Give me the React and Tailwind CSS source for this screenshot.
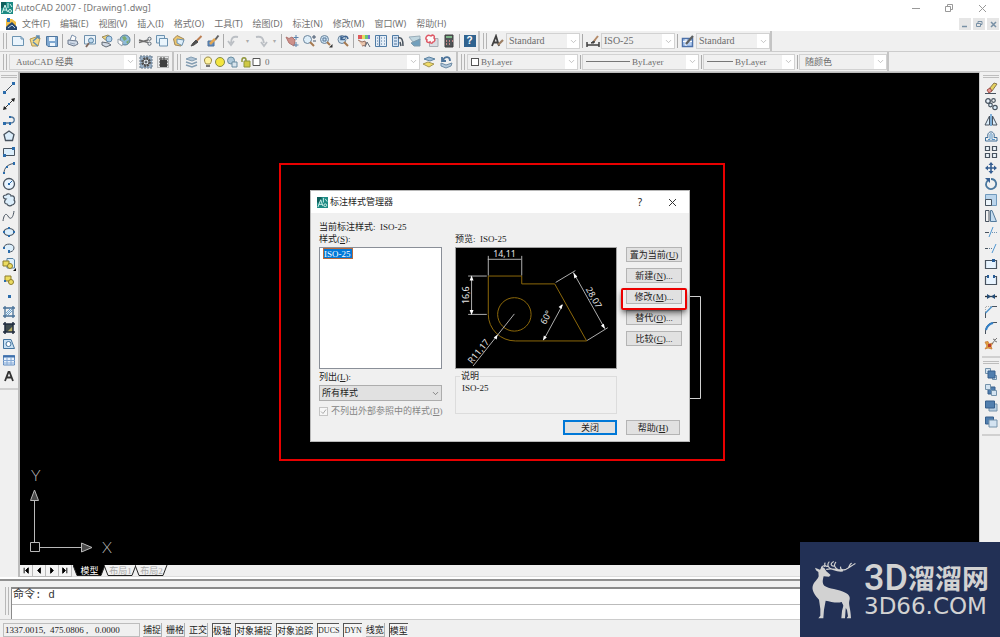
import { ChevronDown } from "lucide-react";

const SIM = "font-['Liberation_Serif','Noto_Sans_CJK_SC',serif]";

function Icon({ children, className = "" }) {
  return (
    <svg
      viewBox="0 0 14 14"
      fill="none"
      stroke="#48535f"
      className={`w-3.5 h-3.5 shrink-0 ${className}`}
      aria-hidden="true"
    >
      {children}
    </svg>
  );
}

function CadMark({ className = "" }) {
  return (
    <svg viewBox="0 0 12 12" className={`shrink-0 ${className}`} aria-hidden="true">
      <rect width="12" height="12" fill="#1d8a84" />
      <path d="M0 0h5v3L2 6H0z" fill="#0e5f5c" />
      <path d="M1 11L4 3L6.500 10M2 8H6M7 1V6M9 2L11 5" fill="none" stroke="#d8f3ee" />
      <circle cx="9" cy="9" r="1.500" fill="none" stroke="#d8f3ee" />
    </svg>
  );
}

/* STANDARD TOOLBAR */
const fileTools = [
  ["新建", <><path d="M1.5 2.500H10L12.500 5V11.500H1.500Z" fill="#eaf5ff" stroke="#5584a8" /><path d="M10 2.500V5h2.500" stroke="#5584a8" /></>],
  ["打开", <><path d="M2 5L8 3L12 4L10 12L4 12Z" fill="#f4d675" stroke="#a88737" /><path d="M5 7L11 2M8 2h3v3M5 8L10 12" stroke="#477ba5" strokeWidth="1.500" /></>],
  ["保存", <><path d="M1.500 2.500H12.500V12.500H3L1.500 11Z" fill="#6c9ccc" stroke="#356391" /><path d="M4 3h6v4H4zM5 9h5v3H5z" fill="#edf6ff" stroke="none" /></>],
];
const plotTools = [
  ["打印", <><path d="M4 6L6 1L10 3L9 7" fill="#fff" stroke="#6780a0" /><path d="M2 6L11 7L12 10L8 12L2 10Z" fill="#cad6e6" stroke="#56657c" /><path d="M4 9L9 10" stroke="#8295ad" /></>],
  ["打印预览", <><path d="M1.500 1.500H12.500V10H1.500Z" fill="#e8f3fb" stroke="#5980a1" /><circle cx="8" cy="6.500" r="2.500" fill="#b5d6ef" stroke="#406f95" /><path d="M6 9L3 13" stroke="#6b5145" strokeWidth="1.800" /></>],
  ["发布", <><path d="M2 3L8 1L12 4L8 8Z" fill="#f2d267" stroke="#8c7b48" /><circle cx="9" cy="5" r="3" fill="#a8d0ed" stroke="#4c789f" /><path d="M2 8L8 9L11 11L6 13L2 11Z" fill="#ccd6e2" /></>],
  ["三维 DWF", <><circle cx="8" cy="6" r="5" fill="#7eb3d8" stroke="#3d6b88" /><path d="M5 3L8 2L10 5L7 7ZM9 8L12 6L11 10Z" fill="#6a9e59" stroke="none" /><path d="M1 5L6 8L5 12L1 9Z" fill="#fff" stroke="#8894a0" /></>],
];
const editTools = [
  ["剪切", <><path d="M1 6L10 8.500M1 8.500L10 6" stroke="#555" strokeWidth="1.300" /><circle cx="11.500" cy="4.800" r="1.600" /><circle cx="11.500" cy="9.700" r="1.600" /></>],
  ["复制", <><path d="M1.500 1.500H9.500V9H1.500Z" fill="#dceefb" stroke="#5682a5" /><path d="M4.500 4.500H12.500V12H4.500Z" fill="#eaf6ff" stroke="#5682a5" /></>],
  ["粘贴", <><path d="M1.500 5L5 1.500L12 5L9 12L3 11Z" fill="#eebf55" stroke="#8f7541" /><path d="M5 5L12 6L10 11.500L5 9Z" fill="#dceefb" stroke="#5682a5" /></>],
  ["特性匹配", <><path d="M12.500 2L8 6.500" stroke="#b36b38" strokeWidth="2" /><path d="M7 6L9 8L5 11L2 12L4 9Z" fill="#333" stroke="#333" /></>],
  ["块编辑器", <><path d="M2 7h6v5H2z" fill="#477cba" stroke="#345d8b" /><path d="M12.500 1.500L9 6" stroke="#4a4a4a" strokeWidth="2" /><path d="M9 5L4 10" stroke="#e09a38" strokeWidth="2.500" /></>],
];
const undoTool = ["放弃", <path d="M11 3C6 2 4 4 4 9M1 7L4 11L7 7" stroke="#b2b7bd" strokeWidth="1.800" />];
const redoTool = ["重做", <path d="M2 3C8 2 9 4 10 9M7 8L10 12L13 8" stroke="#b2b7bd" strokeWidth="1.800" />];
const viewTools = [
  ["实时平移", <><path d="M1 3L4 4.500L7 3L10 6L9 12L4 9Z" fill="#c88079" stroke="#a65e59" /><path d="M11 1V6M8.500 3.500h5M11 8V13M8.500 11h5" stroke="#426f9d" /></>],
  ["实时缩放", <><circle cx="5.500" cy="5.500" r="4" fill="#dceefb" stroke="#54728e" /><path d="M8 8L12 12" stroke="#9a6535" strokeWidth="2" /><path d="M10 3h4M12 1v4M11 7h3" stroke="#243a56" /></>],
  ["窗口缩放", <><circle cx="5.500" cy="5.500" r="4" fill="#c7e0f3" stroke="#54728e" /><path d="M4 4h3v3H4z" stroke="#3e6287" /><path d="M8 8L11 11" stroke="#9a6535" strokeWidth="2" /><path d="M13.500 10V13.500H10Z" fill="#111" stroke="none" /></>],
  ["缩放上一个", <><circle cx="6" cy="5.500" r="4" fill="#c7e0f3" stroke="#54728e" /><path d="M8 8L12 12" stroke="#9a6535" strokeWidth="2" /><path d="M12 5C11 1 7 2 5 5M5 2V5.500H9" stroke="#1f4b7f" strokeWidth="1.500" /></>],
];
const paletteTools = [
  ["特性", <><path d="M1 1h4v4H1z" fill="#db4141" stroke="none" /><path d="M5 1h3v4H5z" fill="#e5d94a" stroke="none" /><path d="M8 1h3v4H8z" fill="#4cc068" stroke="none" /><path d="M11 1h2v4h-2z" fill="#5b5bd5" stroke="none" /><path d="M1 6L5 8L8 7L9 11L5 12" fill="#e9bea1" stroke="#8b5d4b" /><path d="M8 13L10 8L13 13" /></>],
  ["设计中心", <><path d="M1.500 1.500H12.500V12.500H1.500Z" fill="#e4eef9" stroke="#35689a" /><path d="M5.500 2V12M3 4h1M3 7h1M3 10h1M7 4h1M10 4h1M7 7h1M10 7h1M7 10h1M10 10h1" stroke="#356391" strokeWidth="1.200" /></>],
  ["工具选项板", <><path d="M1.500 1.500H7.500V12.500H1.500Z" fill="#d2e3f5" stroke="#35689a" /><path d="M3 4h3M3 7h3M3 10h3" stroke="#356391" /><path d="M7 4C11 3 12 6 12 12M9 8L10 12" stroke="#2f3b48" strokeWidth="1.500" /></>],
  ["图纸集", <><path d="M1 3L12 2V6L5 8Z" fill="#b9d3de" stroke="#8aa2b0" /><path d="M3 9L12 5V12L6 12Z" fill="#5b91b3" stroke="#6b8ba0" /></>],
  ["标记集", <><path d="M4.500 4.500H13V12.500H4.500Z" fill="#d6dae0" stroke="#9ba2aa" /><path d="M2 2C4 0 5 2 6 2C8 0 10 2 9 4C11 6 9 8 8 8C7 10 5 9 5 8C3 9 1 8 2 6C0 5 1 3 2 2Z" fill="#fff" stroke="#db3d4d" strokeWidth="1.500" /></>],
  ["计算器", <><path d="M3 1h8v12H3z" fill="#353a3e" stroke="#222" /><path d="M4 3h6" stroke="#68ac75" strokeWidth="2" /><path d="M4 7h1M7 7h1M10 7h1M4 10h1M7 10h1" stroke="#ed8989" strokeWidth="1.500" /></>],
];
const textStyleIcon = <><path d="M1 12L5 2L8 12M3 8.500h4" stroke="#222" strokeWidth="1.800" /><path d="M7 11L12 6" stroke="#8f6c4c" strokeWidth="2.200" /></>;
const dimStyleIcon = <><path d="M1 11H13M1 8V13M13 8V13" stroke="#222" strokeWidth="1.500" /><path d="M5 9L9 6L8 9Z" fill="#222" stroke="#222" /><path d="M8 7L12 2" stroke="#aa7850" strokeWidth="2" /></>;
const tableStyleIcon = <><path d="M1.500 4.500H11.500V12.500H1.500Z" fill="#a9c8f3" stroke="#315c9d" strokeWidth="1.500" /><path d="M2 7.500h9M5 5v7" stroke="#fff" /><path d="M5 10L12 2" stroke="#44474a" strokeWidth="2.200" /></>;

const gearIcon = <><path d="M1 1h12v12H1z" fill="#8ca6bf" stroke="#4c657b" strokeDasharray="2 1" /><circle cx="7" cy="7" r="4" fill="none" stroke="#333" strokeWidth="1.800" strokeDasharray="2 1.100" /><circle cx="7" cy="7" r="3" fill="#dfe7ee" stroke="#333" /><circle cx="7" cy="7" r="1" fill="#222" /></>;
const workspaceIcon = <><path d="M1.500 1.500h11v11h-11z" fill="#e4e6e8" stroke="#777" strokeDasharray="1 1" /><path d="M4 5h7v7H4z" fill="#222" stroke="none" /><path d="M3 4h9M5 2v10M8 2v10M3 7h9M3 10h9" stroke="#222" /></>;
const layersIcon = <><path d="M1 4L6 2L12 4L7 6Z" fill="#a5bed2" stroke="#7390a8" /><path d="M1 7L7 9L12 7M1 10L7 12L12 10" stroke="#7390a8" strokeWidth="1.500" /></>;
const layerCurrentIcon = <><path d="M2 4L7 2L13 4L8 6Z" fill="#91b6d3" stroke="#426f93" /><path d="M1 9L6 7L12 9L7 12Z" fill="#f0d94f" stroke="#98863b" /></>;
const layerPrevIcon = <><path d="M2 8L7 10L13 8L12 11L7 13L2 11Z" fill="#a9c2d8" stroke="#597c9a" /><path d="M11 6C11 1 6 1 4 5M3 2V6H7" stroke="#315f8d" strokeWidth="1.800" /></>;

/* DRAW TOOLBAR */
const drawTools = [
  ["直线", <><path d="M2.500 11.500L11.500 2.500" /><path d="M1 10h3v3H1zM10 1h3v3h-3z" fill="#2b6cab" stroke="none" /></>],
  ["构造线", <><path d="M2 12L12 2" stroke="#333" /><path d="M1 13L2 9L5 12ZM13 1L9 2L12 5Z" fill="#222" stroke="none" /><path d="M6 6h2v2H6z" fill="#2b6cab" stroke="none" /></>],
  ["多段线", <><path d="M2 10H8M8 10C14 10 13 4 9 4H7" stroke="#52779b" strokeWidth="1.300" /><path d="M1 9h3v3H1zM7 9h2v3H7zM7 3h2v2H7z" fill="#2b6cab" stroke="none" /></>],
  ["正多边形", <path d="M7 2L12 5.500L10.500 11.500H3.500L2 5.500Z" fill="#dceefb" strokeWidth="1.300" />],
  ["矩形", <><path d="M1.500 3.500H12.500V10.500H1.500Z" fill="#dceefb" /><path d="M1 9h3v3H1zM10 2h3v3h-3z" fill="#2b6cab" stroke="none" /></>],
  ["圆弧", <><path d="M2 12C2 7 6 3 12 2.500" /><path d="M1 11h2v2H1zM4 5h2v2H4zM11 1h2v3h-2z" fill="#2b6cab" stroke="none" /></>],
  ["圆", <><circle cx="7" cy="7" r="5.500" fill="#e8f4ff" strokeWidth="1.300" /><path d="M7 7L10 4" stroke="#2b6cab" /><path d="M6 6h2v2H6z" fill="#2b6cab" stroke="none" /></>],
  ["修订云线", <path d="M4 6C1 6 0 2 4 2C6 0 9 1 9 3C12 2 13 5 12 7C14 9 12 12 10 12C8 14 5 12 5 11C2 11 2 8 4 6Z" fill="#dceefb" strokeWidth="1.200" />],
  ["样条曲线", <path d="M1 12C2 5 4 4 6 7C8 11 11 10 12 2" />],
  ["椭圆", <><ellipse cx="7" cy="7" rx="5" ry="3.500" fill="#dceefb" strokeWidth="1.200" /><path d="M1 6h2v2H1zM11 6h2v2h-2zM6 2h2v2H6zM6 10h2v2H6z" fill="#2b6cab" stroke="none" /></>],
  ["椭圆弧", <><path d="M2 6C3 2 12 2 12 7C12 10 9 11 7 11" fill="#dceefb" /><path d="M1 6h2v2H1zM6 9h2v3H6z" fill="#2b6cab" stroke="none" /></>],
  ["插入块", <><path d="M5 1.500H11L12.500 3V11H5Z" fill="#dceefb" stroke="#5682a5" /><path d="M1 4h6v5H1z" fill="#ecdc61" stroke="#8c7d2c" /><circle cx="8" cy="9" r="2.500" fill="#ecdc61" stroke="#8c7d2c" /><path d="M14 11V14H11Z" fill="#111" stroke="none" /></>],
  ["创建块", <><path d="M3 3h6v5H3z" fill="#ecdc61" stroke="#8c7d2c" /><circle cx="9" cy="9" r="2.500" fill="#ecdc61" stroke="#8c7d2c" /><path d="M2 7h2v2H2z" fill="#2b6cab" stroke="none" /></>],
  ["点", <path d="M6 6h3v3H6z" fill="#2b6cab" stroke="none" />],
  ["图案填充", <><path d="M3 1V13M11 1V13M1 3H13M1 11H13" stroke="#456f96" strokeWidth="1.300" /><path d="M4 8L8 4M4 10L10 4M6 10L10 6" stroke="#6ba2cf" /></>],
  ["渐变色", <><path d="M3 3h8v8H3z" fill="#3e4a4e" stroke="none" /><path d="M5 11L11 5V11Z" fill="#b8ad62" stroke="none" /><path d="M3 1V13M11 1V13M1 3H13M1 11H13" stroke="#1f2b3e" strokeWidth="1.500" /></>],
  ["面域", <><path d="M1.500 2.500H9L12.500 11.500H1.500Z" fill="#c8e0f4" stroke="#42739e" /><circle cx="6.500" cy="7" r="2.500" fill="#fff" stroke="#42739e" /></>],
  ["表格", <><path d="M1.500 2.500H12.500V12H1.500Z" fill="#e8f2fc" stroke="#5f8abe" /><path d="M1 3.500H13" stroke="#3e6faa" strokeWidth="2" /><path d="M1 7.500H13M1 10H13M5 4V12M9 4V12" stroke="#84a8d5" /></>],
  ["多行文字", <path d="M3 12L6.500 3H7.500L11 12M4 8.500H10" stroke="#333" strokeWidth="1.800" />],
];

/* MODIFY TOOLBAR */
const modifyTools = [
  ["删除", <><path d="M5 8L10 2L13 3L8 10Z" fill="#e4d15f" stroke="#89774a" /><path d="M3 9L6 7L8 10L5 12Z" fill="#e69993" stroke="#a14e48" /><path d="M1 12.500H12" /></>],
  ["复制对象", <><circle cx="4" cy="4" r="2.300" fill="#e8f1fa" strokeWidth="1.300" /><circle cx="9.500" cy="3.500" r="1.800" strokeWidth="1.200" /><circle cx="6.500" cy="8" r="1.800" fill="#dceefb" strokeWidth="1.200" /><circle cx="11" cy="10.500" r="2.200" fill="#dceefb" strokeWidth="1.200" /></>],
  ["镜像", <><path d="M5.500 3V12H1ZM8.500 3V12H13Z" fill="#dceefb" /><path d="M7 1V13" stroke="#5b9bd0" strokeWidth="1.500" /></>],
  ["偏移", <><path d="M1.500 12V8.500H4C2 1 12 1 10 8.500H13V12Z" stroke="#406e97" /><path d="M4 10.500H6V6C6 4 8 4 8 6V10.500H11" stroke="#5794c7" /></>],
  ["阵列", <><path d="M1.500 1.500h4v4h-4zM8.500 1.500h4v4h-4zM1.500 8.500h4v4h-4zM8.500 8.500h4v4h-4z" fill="#eef5fb" strokeWidth="1.200" /></>],
  ["移动", <><path d="M7 2V12M2 7H12" stroke="#365f92" strokeWidth="1.600" /><path d="M7 1L9.500 4H4.500ZM7 13L4.500 10H9.500ZM1 7L4 4.500V9.500ZM13 7L10 9.500V4.500Z" fill="#365f92" stroke="none" /></>],
  ["旋转", <><path d="M4 3C-1 9 5 14 10 11C14 8 12 2 7 2" stroke="#4b789f" strokeWidth="1.800" /><path d="M1 1H6V6Z" fill="#365f92" stroke="none" /></>],
  ["缩放", <><path d="M1.500 1.500H12.500V12.500H1.500Z" fill="#bbd5ec" stroke="#7099bc" /><path d="M1.500 6.500H7.500V12.500H1.500Z" fill="#edf5fb" /></>],
  ["拉伸", <><path d="M1.500 1.500H5V12.500H1.500Z" /><path d="M6.500 1.500H8L12.500 12.500H6.500Z" fill="#c4dcf0" stroke="#537a9c" /></>],
  ["修剪", <><path d="M1 7.500H5" /><path d="M5 12L9 2" stroke="#5097d2" /><path d="M8 7.500H13" stroke="#7295b4" strokeDasharray="1 1" /></>],
  ["延伸", <><path d="M1 7.500H4" /><path d="M5 7.500H9" stroke="#5d7c96" strokeDasharray="1 1" /><path d="M8 12L12 3" stroke="#5097d2" /></>],
  ["打断于点", <><path d="M1.500 3.500H12.500V11.500H1.500Z" fill="#e8f4ff" strokeWidth="1.200" /><path d="M8 2h3v3H8z" fill="#285d97" stroke="none" /></>],
  ["打断", <><path d="M4 3.500H1.500V11.500H12.500V3.500H10" fill="#e8f4ff" strokeWidth="1.200" /><path d="M3 2h2v3H3zM9 2h2v3H9z" fill="#285d97" stroke="none" /></>],
  ["合并", <><path d="M1 7.500H13" stroke="#333" strokeWidth="1.300" /><path d="M3 5L7 7.500L3 10ZM11 5L7 7.500L11 10Z" fill="#244d77" stroke="none" /></>],
  ["倒角", <><path d="M1.500 13V7M8 1.500H13" /><path d="M1.500 8L8 1.500" stroke="#4b91ca" strokeWidth="1.500" /><path d="M2 1.500h5M1.500 2v5" stroke="#aaa" strokeDasharray="1 1" /></>],
  ["圆角", <><path d="M1.500 13V10C2 5 5 2 10 1.500H13" /><path d="M2 9C3 5 5 3 9 2" stroke="#307fc7" strokeWidth="2" /></>],
  ["分解", <><path d="M1 5L4 4.500L5 7L9 6L7 9L8 12L4 11L1 12L3 9Z" fill="#e2a23d" stroke="#c97a3a" strokeWidth="0.800" /><path d="M4 7h3v3H4z" fill="#b93b2d" stroke="none" /><path d="M8 7L11 3M9 2L11 3L13 1M11 4L13 5" stroke="#777" /></>],
];
const orderTools = [
  ["前置", <><path d="M1.500 1.500h5v5h-5zM8.500 8.500h4v4h-4z" fill="#d3e3f1" stroke="#7492aa" /><path d="M4 4h7v7H4z" fill="#507eae" stroke="#365f8c" /></>],
  ["后置", <><path d="M4 4h7v7H4z" fill="#507eae" stroke="#365f8c" /><path d="M1.500 1.500h5v5h-5zM7.500 7.500h5v5h-5z" fill="#d3e3f1" stroke="#7492aa" /></>],
  ["置于对象之上", <><path d="M5 5h8v7H5z" fill="#b9cfe3" stroke="#7492aa" /><path d="M1.500 2h9v7h-9z" fill="#507eae" stroke="#365f8c" /></>],
  ["置于对象之下", <><path d="M1.500 2h8v7h-8z" fill="#507eae" stroke="#365f8c" /><path d="M5 5h8v7H5z" fill="#d3e3f1" stroke="#7492aa" /></>],
];

const menus = [
  "文件(F)", "编辑(E)", "视图(V)", "插入(I)", "格式(O)", "工具(T)",
  "绘图(D)", "标注(N)", "修改(M)", "窗口(W)", "帮助(H)",
];

const modes = [
  ["捕捉", false], ["栅格", false], ["正交", false], ["极轴", true], ["对象捕捉", true],
  ["对象追踪", true], ["DUCS", true], ["DYN", true], ["线宽", false], ["模型", true],
];

function Tool({ tool, className = "w-[17px] h-4 opacity-85" }) {
  return (
    <button aria-label={tool[0]} className={`flex items-center justify-center shrink-0 ${className}`}>
      <Icon>{tool[1]}</Icon>
    </button>
  );
}

function Tools({ items }) {
  return items.map((tool) => <Tool key={tool[0]} tool={tool} />);
}

function Grip() {
  return (
    <div className="flex gap-0.5 h-4 ml-[3px] mr-[2px] shrink-0">
      <div className="w-px bg-[#b5b5b5]" />
      <div className="w-px bg-[#b5b5b5]" />
    </div>
  );
}

function Divider() {
  return <div className="w-px h-3.5 ml-[2px] mr-px bg-[#aaaaaa] shrink-0" />;
}

function Strip({ children }) {
  return (
    <div className="flex items-center h-full border-r-2 border-[#c4c4c4] shrink-0">
      {children}
    </div>
  );
}

function Combo({ label, value, width, prefix, text = "text-[9px]" }) {
  return (
    <div className={`flex items-center h-4 border border-[#d2d2d2] bg-[#f0f0f0] relative shrink-0 ${width}`}>
      {prefix}
      <select
        aria-label={label}
        className={`${SIM} ${text} appearance-none flex-1 min-w-0 h-full pl-[2px] leading-3 text-[#6c6c6c]`}
      >
        <option>{value}</option>
      </select>
      <span className="absolute right-0 inset-y-0 w-3 bg-white flex items-center justify-center pointer-events-none">
        <ChevronDown size={9} strokeWidth={2} className="text-[#b0b0b0]" />
      </span>
    </div>
  );
}

function TitleBar() {
  return (
    <header className="font-['Noto_Sans','Noto_Sans_CJK_SC',sans-serif] bg-white">
      <div className="flex items-center h-4 pl-px text-[#777777]">
        <CadMark className="w-3 h-3" />
        <h1 className="text-[9px] leading-3 pl-0.5">AutoCAD 2007 - [Drawing1.dwg]</h1>
        <div className="ml-auto flex items-center gap-[23px] pr-[13px]">
          <button aria-label="最小化"><svg className="w-2.5 h-2.5" viewBox="0 0 10 10" stroke="#999" fill="none"><path d="M1 5.500h8" /></svg></button>
          <button aria-label="还原"><svg className="w-2.5 h-2.5" viewBox="0 0 10 10" stroke="#999" fill="none"><path d="M1.500 3.500h5v5h-5zM3.500 3V1.500h5v5H7" /></svg></button>
          <button aria-label="关闭窗口"><svg className="w-2.5 h-2.5" viewBox="0 0 10 10" stroke="#999" fill="none"><path d="M2 2l7 7M9 2L2 9" /></svg></button>
        </div>
      </div>
      <nav className="flex items-center h-[15px] pl-[5px] text-[9px] leading-3 text-[#717171]">
        <svg className="w-3 h-3 mr-[5px]" viewBox="0 0 12 12" aria-hidden="true">
          <path d="M1 1h6l4 3v5H1z" fill="#f1bd43" />
          <path d="M2 0h3v4H2z" fill="#2c71b8" />
          <path d="M3 7L7 4L12 9V12H1V9Z" fill="#27476e" />
          <path d="M3 10L7 7L10 10" stroke="#b7d1e9" fill="none" />
        </svg>
        <div className="flex gap-2.5">
          {menus.map((m) => (
            <button key={m} className="whitespace-nowrap">{m}</button>
          ))}
        </div>
        <div className="ml-auto flex gap-[2px] pr-px">
          <button aria-label="最小化图形" className="w-3 h-3 bg-[#e6e6e6]"><svg viewBox="0 0 12 12" stroke="#7890a5" fill="none"><path d="M3 8.500h5" strokeWidth="1.500" /></svg></button>
          <button aria-label="还原图形" className="w-3 h-3 bg-[#e6e6e6]"><svg viewBox="0 0 12 12" stroke="#7890a5" fill="none"><path d="M3.500 5.500h4v3h-4zM5 5V3.500h4v3H8" /></svg></button>
          <button aria-label="关闭图形" className="w-3 h-3 bg-[#e6e6e6]"><svg viewBox="0 0 12 12" stroke="#7890a5" fill="none"><path d="M4 4l5 5M9 4L4 9" strokeWidth="1.500" /></svg></button>
        </div>
      </nav>
    </header>
  );
}

function Toolbars() {
  return (
    <div>
      <div className="flex items-center h-[21px] border-b border-[#cccccc]">
        <Strip>
          <Grip />
          <Tools items={fileTools} />
          <Divider />
          <Tools items={plotTools} />
          <Divider />
          <Tools items={editTools} />
          <Divider />
          <Tool tool={undoTool} />
          <button aria-label="放弃列表" className="w-2.5 text-[6px] leading-3 text-[#aaaaaa]">▾</button>
          <Tool tool={redoTool} />
          <button aria-label="重做列表" className="w-2.5 text-[6px] leading-3 text-[#aaaaaa]">▾</button>
          <Divider />
          <Tools items={viewTools} />
          <Divider />
          <Tools items={paletteTools} />
          <Divider />
          <button aria-label="帮助" className="w-[17px] h-4 flex items-center justify-center">
            <span className="w-3 h-3 bg-[#30638f] text-white font-['Liberation_Sans',sans-serif] font-bold text-[10px] leading-3">?</span>
          </button>
        </Strip>
        <Strip>
          <Grip />
          <Tool tool={["文字样式", textStyleIcon]} />
          <Combo label="文字样式控制" value="Standard" width="w-[74px]" text="text-[10px]" />
          <Divider />
          <Tool tool={["标注样式", dimStyleIcon]} />
          <Combo label="标注样式控制" value="ISO-25" width="w-[74px]" text="text-[10px]" />
          <Divider />
          <Tool tool={["表格样式", tableStyleIcon]} />
          <Combo label="表格样式控制" value="Standard" width="w-[74px]" text="text-[10px]" />
        </Strip>
      </div>
      <div className="flex items-center h-5 border-b border-[#cccccc]">
        <Strip>
          <Grip />
          <Combo label="工作空间" value="AutoCAD 经典" width="w-32" prefix={<span className="w-1" />} />
          <Tool tool={["工作空间设置", gearIcon]} />
          <Tool tool={["我的工作空间", workspaceIcon]} />
          <div className="w-px" />
        </Strip>
        <Strip>
          <Grip />
          <Tool tool={["图层特性管理器", layersIcon]} />
          <Combo
            label="图层"
            value="0"
            width="w-[220px]"
            prefix={
              <svg viewBox="0 0 62 14" className="w-[62px] h-3.5 shrink-0" fill="none" aria-hidden="true">
                <path d="M5 9C2 5 4 2 7 2S12 5 9 9Z" fill="#fff3a0" stroke="#9a8a42" />
                <path d="M5 11h4" stroke="#777" strokeWidth="2" />
                <circle cx="19" cy="7" r="4.500" fill="#f3e53f" stroke="#85894a" />
                <circle cx="30" cy="5.500" r="3.500" fill="#adc8d9" stroke="#688ba0" />
                <path d="M31 7h5v5h-5z" fill="#d8e4ed" stroke="#688ba0" />
                <path d="M41 7V5C41 2 45 2 45 5V7" stroke="#8f953b" strokeWidth="1.500" />
                <path d="M43 6h6v6h-6z" fill="#cfc943" stroke="#8f953b" />
                <path d="M52 3.500h7v7h-7z" fill="#fff" stroke="#555" />
              </svg>
            }
          />
          <Tool tool={["置为当前图层", layerCurrentIcon]} />
          <Tool tool={["上一个图层", layerPrevIcon]} />
          <div className="w-[2px]" />
        </Strip>
        <Strip>
          <Grip />
          <Combo
            label="颜色"
            value="ByLayer"
            width="w-[111px]"
            prefix={<span className="w-2 h-2 ml-[3px] border border-[#555555] bg-white" />}
          />
          <Divider />
          <Combo
            label="线型"
            value="ByLayer"
            width="w-[117px]"
            prefix={<span className="w-11 h-px ml-[3px] bg-[#777777]" />}
          />
          <Divider />
          <Combo
            label="线宽"
            value="ByLayer"
            width="w-[92px]"
            prefix={<span className="w-[26px] h-px ml-[3px] bg-[#777777]" />}
          />
          <Divider />
          <Combo label="打印样式" value="随颜色" width="w-[88px]" prefix={<span className="w-[3px]" />} />
        </Strip>
      </div>
    </div>
  );
}

function SidePalette({ items }) {
  return (
    <div className="flex flex-col items-center pt-[3px] pb-1 border-b-2 border-[#d0d0d0]">
      <div className="w-4 h-[3px] mb-[2px] border-y border-[#bdbdbd]" />
      {items.map((tool) => (
        <Tool key={tool[0]} tool={tool} className="w-4 h-4" />
      ))}
    </div>
  );
}

function DimensionPreview() {
  return (
    <svg
      viewBox="0 0 162 122"
      className="w-full h-[122px] bg-black border border-[#a0a0a0] font-['Noto_Sans',sans-serif]"
      fill="none"
      role="img"
      aria-label="标注样式预览"
    >
      <g stroke="#8f6a0a">
        <path d="M32.500 67.500V28.500H66.500V36.500H100L132.500 94.500H60A27.500 27 0 0 1 32.500 67.500" />
        <circle cx="59" cy="67.500" r="17" />
      </g>
      <g stroke="#c4c4c4" strokeWidth="0.900">
        <path d="M32.500 8V28M66.500 8V28M32 11.500H66" />
        <path d="M12 28.500H31M12 67.500H31M15.500 29V67" />
        <path d="M101 35L121 23M133 94L154 81M119 25L151 82" />
        <path d="M108 58L89 93" />
        <path d="M59 67L17 120" />
      </g>
      <g fill="#ffffff">
        <path d="M15.500 28L17.500 33H13.500ZM15.500 68L13.500 63H17.500Z" />
        <path d="M119 25L123 29L120 31ZM151 82L147 79L150 77Z" />
        <path d="M108 57L107 62L104 60ZM88 94L89 89L92 91Z" />
        <path d="M42 88L41 93L38 91Z" />
      </g>
      <g fill="#e4e4e4" fontSize="9" textAnchor="middle">
        <text x="49" y="9">14,11</text>
        <text transform="translate(13 48) rotate(-90)">16,6</text>
        <text transform="translate(137 52) rotate(60)">28,07</text>
        <text transform="translate(94 72) rotate(-62)">60°</text>
        <text transform="translate(25 107) rotate(-51)">R11,17</text>
      </g>
    </svg>
  );
}

const plainButton = "h-[15px] border border-[#b4b4b4] bg-[#e1e1e1] text-center";

function DialogButton({ text, hotkey, more = "...", className = "" }) {
  return (
    <button className={`${plainButton} leading-3 whitespace-nowrap ${className}`}>
      {text}(<u>{hotkey}</u>){more}
    </button>
  );
}

function StyleDialog() {
  return (
    <div
      role="dialog"
      aria-label="标注样式管理器"
      className={`${SIM} absolute left-[290px] top-[117px] w-[380px] h-[252px] border border-[#b8b8b8] bg-[#f0f0f0] text-[9px] leading-3 text-[#222222]`}
    >
      <div className="flex items-center h-[22px] bg-white pl-[6px]">
        <CadMark className="w-[11px] h-[11px]" />
        <h2 className="pl-[2px]">标注样式管理器</h2>
        <button className="ml-auto mr-[22px] w-3 font-['Noto_Sans',sans-serif] text-[10px]" aria-label="帮助说明">?</button>
        <button className="mr-3" aria-label="关闭对话框">
          <svg viewBox="0 0 9 9" className="w-[9px] h-[9px]" stroke="#333" fill="none"><path d="M1 1l7 7M8 1L1 8" /></svg>
        </button>
      </div>

      <div className="pl-2 pt-2">
        <p className="whitespace-pre">当前标注样式:  ISO-25</p>
        <div className="flex">
          {/* STYLE LIST */}
          <div className="w-[123px]">
            <label htmlFor="styles">样式(<u>S</u>):</label>
            <ul id="styles" role="listbox" className="h-[122px] mt-[2px] border border-[#8a8f98] bg-white pl-[3px]">
              <li role="option" aria-selected="true" className="w-[30px] h-[11px] leading-[10px] border border-[#b86a3d] bg-[#0078d7] text-white">
                ISO-25
              </li>
            </ul>
            <label htmlFor="filter" className="block mt-[2px]">列出(<u>L</u>):</label>
            <div className="relative mt-[2px]">
              <select id="filter" className="appearance-none w-full h-4 block pl-[2px] border border-[#adadad] bg-[#e1e1e1]">
                <option>所有样式</option>
              </select>
              <ChevronDown size={9} strokeWidth={2} className="absolute right-0.5 top-1 text-[#666666] pointer-events-none" />
            </div>
            <label className="flex items-center gap-[3px] mt-1 text-[#858585] whitespace-nowrap">
              <span className="relative flex">
                <input type="checkbox" defaultChecked disabled className="appearance-none w-[9px] h-[9px] border border-[#c4c4c4] bg-[#f7f7f7]" />
                <svg viewBox="0 0 9 9" className="absolute inset-0" fill="none" stroke="#aaaaaa"><path d="M2 4.500L4 6.500L7 2.500" /></svg>
              </span>
              <span>不列出外部参照中的样式(<u>D</u>)</span>
            </label>
          </div>

          {/* PREVIEW */}
          <div className="w-[162px] ml-[13px]">
            <p className="mb-[2px] whitespace-pre">预览:  ISO-25</p>
            <DimensionPreview />
            <fieldset className="mt-px h-11 border border-[#dcdcdc] px-1">
              <legend className="px-px">说明</legend>
              <p className="pl-[2px]">ISO-25</p>
            </fieldset>
          </div>

          {/* ACTIONS */}
          <div className="w-14 ml-[9px] pt-3.5 flex flex-col gap-[6px]">
            <DialogButton text="置为当前" hotkey="U" more="" />
            <DialogButton text="新建" hotkey="N" />
            <DialogButton text="修改" hotkey="M" />
            <DialogButton text="替代" hotkey="O" />
            <DialogButton text="比较" hotkey="C" />
          </div>
        </div>
        <div className="flex justify-end gap-[9px] mt-[3px] pr-[9px]">
          <button className="w-[54px] h-[15px] border-2 border-[#0078d7] bg-[#e1e1e1] leading-[10px]">关闭</button>
          <DialogButton text="帮助" hotkey="H" more="" className="w-[54px]" />
        </div>
      </div>
    </div>
  );
}

function Canvas() {
  return (
    <main className="relative flex-1 bg-black overflow-hidden">
      <svg className="absolute left-[670px] top-[223px] w-3 h-[104px]" viewBox="0 0 12 104" fill="none" stroke="#d0d0d0" aria-hidden="true">
        <path d="M0 0.500H10.500V102.500H0" />
      </svg>
      <StyleDialog />
      <div className="absolute left-[259px] top-[90px] w-[446px] h-[298px] border-2 border-[#e80000] pointer-events-none" />
      <div className="absolute left-[601px] top-[215px] w-[66px] h-[22px] border-2 border-[#ec0000] rounded-xs shadow-md shadow-black/50 pointer-events-none" />
      {/* UCS */}
      <svg
        className="absolute left-2 bottom-2.5 w-[90px] h-[92px] font-['Lato',sans-serif] font-light"
        viewBox="0 0 90 92"
        fill="none"
        stroke="#b9b9b9"
        aria-hidden="true"
      >
        <path d="M2.500 79.500h9v9h-9zM6.500 79V37M12 84.500H53" />
        <path d="M6.500 27L10.500 37.500H2.500ZM64 84.500L53.500 80V89Z" fill="#4a4a4a" />
        <text x="3" y="18" fontSize="16" fill="#b9b9b9" stroke="none">Y</text>
        <text x="74" y="90" fontSize="16" fill="#b9b9b9" stroke="none">X</text>
      </svg>
    </main>
  );
}

function LayoutTab({ name, active }) {
  return (
    <button className={`relative w-[31px] h-3 text-[9px] leading-3 ${active ? "text-white" : "text-[#aaaaaa]"}`}>
      <svg viewBox="0 0 33 12" preserveAspectRatio="none" className="absolute -left-px top-0 w-[33px] h-3" aria-hidden="true">
        <path d="M0 0L4 10.500H28L32 0" fill={active ? "#000" : "#f0f0f0"} stroke="#222" />
      </svg>
      <span className="relative">{name}</span>
    </button>
  );
}

function LayoutTabs() {
  const arrows = [
    ["第一个", "M4.500 3v6M9 3L6 6L9 9Z"],
    ["上一个", "M8 3L5 6L8 9Z"],
    ["下一个", "M5 3L8 6L5 9Z"],
    ["最后一个", "M8.500 3v6M4 3L7 6L4 9Z"],
  ];
  return (
    <div className={`${SIM} flex h-3 border-b border-[#dddddd]`}>
      {arrows.map(([name, d]) => (
        <button key={name} aria-label={name} className="w-[13px] h-3 border-r border-b border-[#bbbbbb] bg-[#f4f4f4]">
          <svg viewBox="0 0 13 12" fill="#000" stroke="#000"><path d={d} /></svg>
        </button>
      ))}
      <div className="flex ml-[2px]">
        <LayoutTab name="模型" active />
        <LayoutTab name="布局1" />
        <LayoutTab name="布局2" />
      </div>
    </div>
  );
}

function CommandLine() {
  return (
    <div className="flex border-t-2 border-[#909090] pt-[6px] pl-[5px]">
      <div className="flex gap-[2px] mr-[2px] mb-1 shrink-0">
        <div className="w-px bg-[#b8b8b8]" />
        <div className="w-px bg-[#b8b8b8]" />
      </div>
      <div className="flex-1 border-t-2 border-l border-[#8a8a8a] bg-white font-['Liberation_Mono','Noto_Sans_CJK_SC',monospace] text-[11px] text-[#333333]">
        <p className="h-4 pl-px leading-3 border-b border-[#bbbbbb] whitespace-pre">命令: d</p>
        <input aria-label="命令行" className="block w-full h-3.5 outline-none" />
      </div>
    </div>
  );
}

function StatusBar() {
  return (
    <footer className={`${SIM} flex items-end h-[18px] pl-[3px] border-t border-[#cccccc] text-[9px] leading-3 text-[#222222]`}>
      <div className="w-[137px] h-3.5 pl-px border border-[#bdbdbd] whitespace-pre">
        1337.0015,  475.0806 ,   0.0000
      </div>
      <div className="flex gap-1 pl-[3px]">
        {modes.map(([name, on]) => (
          <button
            key={name}
            aria-pressed={on}
            className={`h-3.5 whitespace-nowrap ${name.startsWith("D") ? "text-[8px]" : ""} ${
              on ? "border-t border-l border-[#555555] bg-[#f6f6f6]" : "border-r border-b border-[#b0b0b0]"
            }`}
          >
            {name}
          </button>
        ))}
      </div>
    </footer>
  );
}

function Watermark() {
  return (
    <aside className="absolute right-0 bottom-0 w-[200px] h-[95px] bg-[#223055] text-[#d2d2d2] flex items-center pl-[11px]">
      <svg viewBox="93 92 135 174" className="w-[45px] h-[58px] shrink-0" fill="#d2d2d2" aria-hidden="true">
        <path d="M105 112L120 118L125 109L133 113L139 123L152 134L147 139L131 138C128 149 126 159 133 166C146 176 176 175 196 187C208 192 212 201 208 211C205 222 212 235 213 264H200L204 258L201 239C197 230 190 224 185 215C170 219 152 214 137 211L132 238L130 264H115L121 256V236L117 208C105 196 95 181 98 168C101 154 113 149 116 138L115 125L108 120Z" />
        <path d="M184 210L190 226L186 242L184 264H195L197 236L200 220Z" />
        <g fill="none" stroke="#d2d2d2" strokeWidth="3.500" strokeLinecap="round">
          <path d="M125 112C126 106 132 106 134 108M135 98C132 106 138 109 143 108M147 95C142 101 143 108 148 112M160 94C149 100 154 108 162 107M140 117C158 111 179 124 198 117C209 112 214 106 225 100M167 96C160 105 164 113 176 119M182 110C180 115 186 119 193 119M214 99C208 103 209 107 205 113M150 114C163 118 171 124 188 122" />
        </g>
      </svg>
      <div className="pl-2">
        <p className="flex items-center h-8 whitespace-nowrap">
          <span className="font-['Roboto',sans-serif] font-medium text-[36px] leading-8">3D</span>
          <span className="font-['Noto_Sans_CJK_SC',sans-serif] font-bold text-[27px] leading-8">溜溜网</span>
        </p>
        <p className="font-['DejaVu_Sans',sans-serif] text-[23px] leading-6">3D66.COM</p>
      </div>
    </aside>
  );
}

function App() {
  return (
    <div className="relative flex flex-col min-h-screen bg-[#f0f0f0] overflow-hidden">
      <TitleBar />
      <Toolbars />
      <div className="flex flex-1">
        <div className="w-[18px] shrink-0">
          <SidePalette items={drawTools} />
        </div>
        <div className="flex flex-col flex-1 border-l-2 border-t border-[#bbbbbb]">
          <Canvas />
          <LayoutTabs />
        </div>
        <div className="w-[21px] pl-[2px] shrink-0 border-l border-[#cccccc]">
          <SidePalette items={modifyTools} />
          <SidePalette items={orderTools} />
        </div>
      </div>
      <div className="h-0.5 bg-white" />
      <CommandLine />
      <StatusBar />
      <Watermark />
    </div>
  );
}

export default App;
